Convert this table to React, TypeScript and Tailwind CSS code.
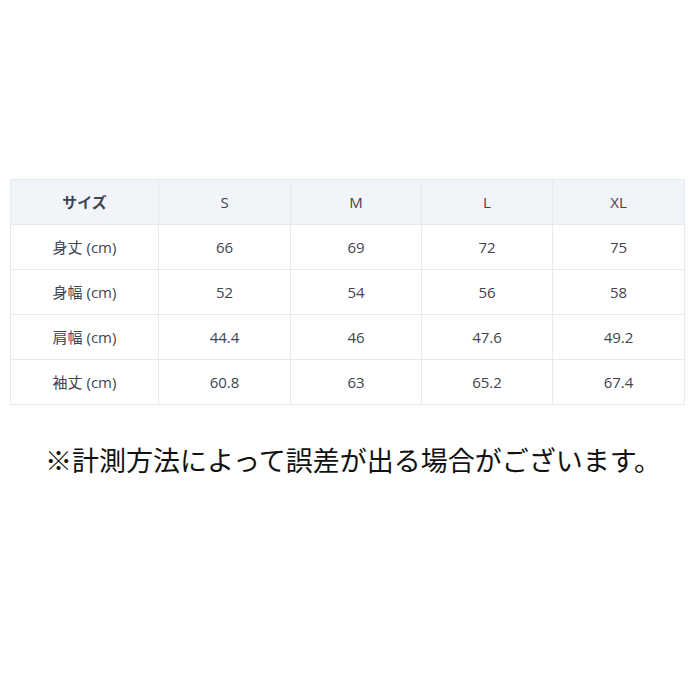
import React from 'react';

const sizes = ['S', 'M', 'L', 'XL'];
const rows: [string, string[]][] = [
  ['身丈 (cm)', ['66', '69', '72', '75']],
  ['身幅 (cm)', ['52', '54', '56', '58']],
  ['肩幅 (cm)', ['44.4', '46', '47.6', '49.2']],
  ['袖丈 (cm)', ['60.8', '63', '65.2', '67.4']],
];

const font = { fontFamily: '"Open Sans", "Noto Sans CJK JP", sans-serif' };

export default function App() {
  return (
    <main className="w-[700px] h-[700px] bg-white pt-[179px]" style={font}>
      <table className="ml-[10px] w-[674px] border-collapse table-fixed text-[15px] text-[#3f4450]">
        <colgroup>
          <col className="w-[148px]" />
          <col className="w-[132px]" />
          <col className="w-[131px]" />
          <col className="w-[131px]" />
          <col className="w-[132px]" />
        </colgroup>
        <thead>
          <tr className="h-[45px] bg-[#f1f4f8]">
            <th className="border border-[#e6e9ee] font-semibold">サイズ</th>
            {sizes.map(s => (
              <th key={s} className="border border-[#e6e9ee] font-medium">{s}</th>
            ))}
          </tr>
        </thead>
        <tbody>
          {rows.map(([label, vals]) => (
            <tr key={label} className="h-[45px]">
              <td className="border border-[#e6e9ee] text-center">{label}</td>
              {vals.map((v, i) => (
                <td key={i} className="border border-[#e6e9ee] text-center">{v}</td>
              ))}
            </tr>
          ))}
        </tbody>
      </table>
      <p
        className="mt-[35px] pl-[12px] text-center text-[27px] text-[#111] w-[694px]"
        style={{ fontFamily: '"Noto Sans CJK JP", sans-serif' }}
      >
        ※計測方法によって誤差が出る場合がございます。
      </p>
    </main>
  );
}
